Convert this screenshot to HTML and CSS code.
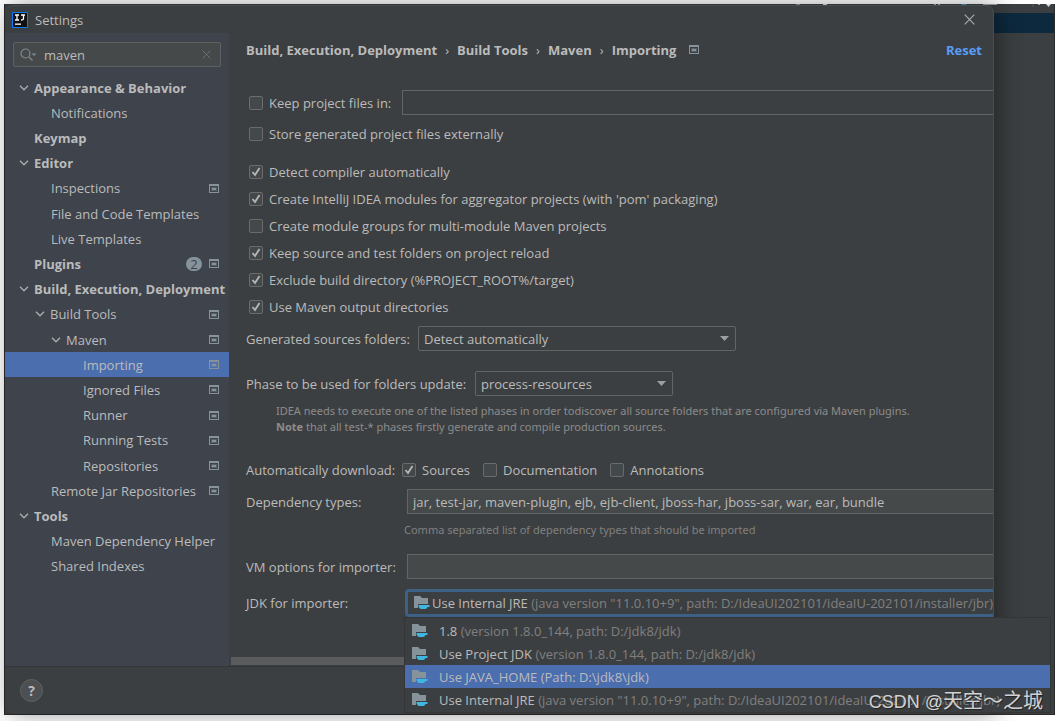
FILE: index.html
```html
<!DOCTYPE html>
<html lang="en">
<head>
<meta charset="utf-8">
<title>Settings</title>
<link rel="stylesheet" href="styles.css">
</head>
<body>
<svg class="sprites" aria-hidden="true">
  <symbol id="scope" viewBox="0 0 10 9"><path fill-rule="evenodd" d="M0 0h10v9H0zM1 2v6h8V2z"/><path d="M2 3h6v4H2zM3 4v2h4V4z" opacity=".35"/><path d="M3 4h4v2H3z"/></symbol>
  <symbol id="chevron" viewBox="0 0 10 6"><path d="M1 .8l4 4 4-4" fill="none" stroke="currentColor" stroke-width="1.3"/></symbol>
  <symbol id="jdk" viewBox="0 0 16 14"><path d="M0 0h6l2 2h6v6H4v4H0z" fill="#87939a"/><path d="M4.500 9h11v2h-2c-.6 1.300-1.300 1.800-2 2H7C5.500 12.500 4.500 11 4.500 9z" fill="#40b6e0"/></symbol>
</svg>
<div class="desktop">
  <div class="ide" aria-hidden="true">
    <div class="ide-toolbar"><svg width="244" height="3" viewBox="0 0 244 3"><circle cx="4" cy="0" r="2" fill="#999"/><circle cx="31" cy="0" r="2.200" fill="#ddd"/><path d="M140 0h2v1h-2zM144 0h2v1h-2z" fill="#aaa"/><circle cx="170" cy="-1" r="3" fill="#3592c4"/><path d="M189 0h14v1h-14z" fill="#9aa7b0"/><path d="M239 0v4M251 0h2" stroke="#555"/></svg><svg width="16" height="4" viewBox="0 0 16 4"><path d="M8 0h5l-2.500 3z" fill="#ddd"/><path d="M0 0h2v1H0z" fill="#aaa"/></svg></div>
    <div class="ide-tabs"></div>
  </div>
  <main class="dialog">
    <header class="titlebar">
      <svg width="16" height="16" viewBox="0 0 16 16"><path d="M.5.5h15v15H.5z" fill="#111" stroke="#087cfa"/><path d="M3 3h4M5 3v5M3 8h4M9 3h4M11.500 3v3.500q0 1.500-2.500 1.500" fill="none" stroke="#fff" stroke-width="1.300"/><path d="M3 11.500h6v1.300H3z" fill="#fff"/></svg>
      <h1>Settings</h1>
      <button class="close" aria-label="Close"><svg width="11" height="11" viewBox="0 0 11 11"><path d="M.7.7l9.600 9.600M10.300.7L.7 10.300" stroke="#a8aaab" stroke-width="1.200"/></svg></button>
    </header>
    <aside class="sidebar">
      <div class="search">
        <svg width="17" height="14" viewBox="0 0 17 14"><circle cx="5.500" cy="5.500" r="4.500" fill="none" stroke="#7f8b91" stroke-width="1.200"/><path d="M9 9l3.500 3.500" stroke="#7f8b91" stroke-width="1.300"/><path d="M11.500 5.500h5L14 8z" fill="#7f8b91"/></svg>
        <input type="text" value="maven" aria-label="Search settings">
        <button aria-label="Clear"><svg width="9" height="9" viewBox="0 0 9 9"><path d="M.7.7l7.600 7.600M8.300.7L.7 8.300" stroke="#6d7375"/></svg></button>
      </div>
      <ul class="tree">
        <li class="top"><svg class="chev"><use href="#chevron"/></svg><span>Appearance &amp; Behavior</span></li>
        <li class="l2"><span>Notifications</span></li>
        <li class="top leaf"><span>Keymap</span></li>
        <li class="top"><svg class="chev"><use href="#chevron"/></svg><span>Editor</span></li>
        <li class="l2"><span>Inspections</span><svg class="scope"><use href="#scope"/></svg></li>
        <li class="l2"><span>File and Code Templates</span></li>
        <li class="l2"><span>Live Templates</span></li>
        <li class="top leaf"><span>Plugins</span><b class="badge">2</b><svg class="scope"><use href="#scope"/></svg></li>
        <li class="top"><svg class="chev"><use href="#chevron"/></svg><span>Build, Execution, Deployment</span></li>
        <li class="l1"><svg class="chev"><use href="#chevron"/></svg><span>Build Tools</span><svg class="scope"><use href="#scope"/></svg></li>
        <li class="l2"><svg class="chev"><use href="#chevron"/></svg><span>Maven</span><svg class="scope"><use href="#scope"/></svg></li>
        <li class="l4 selected"><span>Importing</span><svg class="scope"><use href="#scope"/></svg></li>
        <li class="l4"><span>Ignored Files</span><svg class="scope"><use href="#scope"/></svg></li>
        <li class="l4"><span>Runner</span><svg class="scope"><use href="#scope"/></svg></li>
        <li class="l4"><span>Running Tests</span><svg class="scope"><use href="#scope"/></svg></li>
        <li class="l4"><span>Repositories</span><svg class="scope"><use href="#scope"/></svg></li>
        <li class="l2"><span>Remote Jar Repositories</span><svg class="scope"><use href="#scope"/></svg></li>
        <li class="top"><svg class="chev"><use href="#chevron"/></svg><span>Tools</span></li>
        <li class="l2"><span>Maven Dependency Helper</span></li>
        <li class="l2"><span>Shared Indexes</span></li>
      </ul>
    </aside>
    <section class="content">
      <nav class="crumbs">
        <span>Build, Execution, Deployment</span><i>›</i><span>Build Tools</span><i>›</i><span>Maven</span><i>›</i><span>Importing</span>
        <svg class="scope"><use href="#scope"/></svg>
        <a href="#reset">Reset</a>
      </nav>
      <form>
        <div class="row keep">
          <label class="check"><input type="checkbox">Keep project files in:</label>
          <input class="field plain" type="text" aria-label="Project files directory">
        </div>
        <div class="row store"><label class="check"><input type="checkbox">Store generated project files externally</label></div>
        <div class="options">
          <label class="check"><input type="checkbox" checked>Detect compiler automatically</label>
          <label class="check"><input type="checkbox" checked>Create IntelliJ IDEA modules for aggregator projects (with 'pom' packaging)</label>
          <label class="check"><input type="checkbox">Create module groups for multi-module Maven projects</label>
          <label class="check"><input type="checkbox" checked>Keep source and test folders on project reload</label>
          <label class="check"><input type="checkbox" checked>Exclude build directory (%PROJECT_ROOT%/target)</label>
          <label class="check"><input type="checkbox" checked>Use Maven output directories</label>
        </div>
        <div class="row sources">
          <label for="gen">Generated sources folders:</label>
          <select id="gen"><option>Detect automatically</option></select>
        </div>
        <div class="row phase">
          <label for="phase">Phase to be used for folders update:</label>
          <select id="phase"><option>process-resources</option></select>
        </div>
        <p class="note">IDEA needs to execute one of the listed phases in order todiscover all source folders that are configured via Maven plugins.<br><b>Note</b> that all test-* phases firstly generate and compile production sources.</p>
        <div class="row download">
          <span class="name">Automatically download:</span>
          <label class="check"><input type="checkbox" checked>Sources</label>
          <label class="check"><input type="checkbox">Documentation</label>
          <label class="check"><input type="checkbox">Annotations</label>
        </div>
        <div class="row dep">
          <label class="name" for="dep">Dependency types:</label>
          <input class="field" id="dep" type="text" value="jar, test-jar, maven-plugin, ejb, ejb-client, jboss-har, jboss-sar, war, ear, bundle">
        </div>
        <p class="hint">Comma separated list of dependency types that should be imported</p>
        <div class="row vm">
          <label class="name" for="vm">VM options for importer:</label>
          <input class="field" id="vm" type="text">
        </div>
        <div class="row jdk">
          <label class="name" for="jdk-button">JDK for importer:</label>
          <div class="combo">
            <button type="button" id="jdk-button" aria-haspopup="listbox" aria-expanded="true"><svg class="jdk-icon"><use href="#jdk"/></svg><span>Use Internal JRE <small>(java version "11.0.10+9", path: D:/IdeaUI202101/ideaIU-202101/installer/jbr)</small></span></button>
            <ul class="popup" role="listbox" aria-label="JDK for importer">
              <li role="option"><svg class="jdk-icon"><use href="#jdk"/></svg><span>1.8 <small>(version 1.8.0_144, path: D:/jdk8/jdk)</small></span></li>
              <li role="option"><svg class="jdk-icon"><use href="#jdk"/></svg><span>Use Project JDK <small>(version 1.8.0_144, path: D:/jdk8/jdk)</small></span></li>
              <li role="option" aria-selected="true" class="selected"><svg class="jdk-icon"><use href="#jdk"/></svg><span>Use JAVA_HOME <small>(Path: D:\jdk8\jdk)</small></span></li>
              <li role="option"><svg class="jdk-icon"><use href="#jdk"/></svg><span>Use Internal JRE <small>(java version "11.0.10+9", path: D:/IdeaUI202101/ideaIU-202101/installer/jbr)</small></span></li>
            </ul>
          </div>
        </div>
      </form>
      <div class="scrollbar"></div>
    </section>
    <footer class="footer"><button class="help" aria-label="Help">?</button></footer>
  </main>
  <div class="watermark"><span>CSDN @</span>天空～之城</div>
</div>
</body>
</html>
```

FILE: styles.css
```css
* { box-sizing: border-box; }
body {
  margin: 0;
  padding: 4px 4px 6px;
  min-height: 100vh;
  display: flex;
  background: #fff;
  color: #bbb;
  font: 13px/18px "Open Sans", "Noto Sans CJK SC", sans-serif;
}
button, input, select { font: inherit; color: inherit; margin: 0; }
button { border: 0; padding: 0; background: none; }
ul, p, h1 { margin: 0; padding: 0; list-style: none; font-size: inherit; font-weight: 400; }
svg { flex: none; display: block; }
.sprites { position: absolute; width: 0; height: 0; }

.desktop {
  position: relative;
  flex: 1;
  display: flex;
  background: #3c3f41;
  border: 1px solid #2b2b2b;
  border-top: 0;
}
.ide { position: absolute; inset: 0; }
.ide-toolbar { height: 9px; display: flex; justify-content: flex-end; gap: 0; }
.ide-tabs { height: 20px; background: #0d293e; }

.dialog {
  position: relative;
  flex: 1;
  margin: 1px 60px 0 0;
  display: grid;
  grid-template: 28px 1fr 48px / 224px 1fr;
  background: #3c3f41;
  border-right: 1px solid #4a4d4f;
  border-radius: 8px;
  box-shadow: 4px 0 24px rgba(0, 0, 0, .4);
}
.titlebar { grid-column: 1 / 3; display: flex; align-items: center; gap: 7px; padding: 0 18px 0 7px; border-top: 1px solid #4a4d4f; border-radius: 8px 8px 0 0; }
.close { margin-left: auto; }

.sidebar { min-width: 0; background: #3e434c; }
.search {
  height: 25px;
  margin: 9px 8px 0;
  padding: 0 9px 0 6px;
  display: flex;
  align-items: center;
  gap: 7px;
  background: #45494a;
  border: 1px solid #5e6162;
  border-radius: 2px;
}
.search input { flex: 1; min-width: 0; padding: 0; border: 0; outline: 0; background: none; }
.tree { min-height: 504px; margin-top: 8px; display: grid; grid-template-columns: 100%; grid-auto-rows: 1fr; }
.tree li { min-width: 0; display: flex; align-items: center; padding: 0 10px 0 14px; gap: 5px; white-space: nowrap; }
.tree span { margin-right: auto; }
.tree .top span { font-weight: 700; }
.tree .leaf { padding-left: 29px; }
.tree .l1 { padding-left: 30px; }
.tree .l2 { padding-left: 46px; }
.tree .l4 { padding-left: 78px; }
.tree .selected { background: #4b6eaf; }
.chev { width: 10px; height: 6px; color: #adadad; }
.scope { width: 10px; height: 9px; fill: #87939a; }
.badge { width: 16px; height: 14px; margin-right: 2px; border-radius: 7px; background: #87939a; color: #3e434c; font-weight: 400; line-height: 14px; text-align: center; }

.content { min-width: 0; display: flex; flex-direction: column; padding-left: 17px; }
.crumbs { height: 33px; display: flex; align-items: center; padding-right: 11px; font-weight: 700; white-space: nowrap; }
.crumbs i { width: 20px; text-align: center; font-style: normal; font-weight: 400; }
.crumbs .scope { margin-left: 13px; }
.crumbs a { margin-left: auto; color: #589df6; text-decoration: none; }

form { padding-top: 24px; }
.row { display: flex; align-items: center; white-space: nowrap; }
.check { display: flex; align-items: center; gap: 6px; padding-left: 3px; white-space: nowrap; }
.check input {
  appearance: none;
  flex: none;
  width: 14px;
  height: 14px;
  border: 1px solid #6b6b6b;
  border-radius: 2px;
  background: #43494a;
}
.check input:checked {
  background: #43494a url("data:image/svg+xml,%3Csvg xmlns='http://www.w3.org/2000/svg' viewBox='0 0 12 12'%3E%3Cpath d='M2.500 6l2.500 3L9.500 2' fill='none' stroke='%23b5b5b5' stroke-width='1.900'/%3E%3C/svg%3E");
}
.field {
  flex: 1;
  min-width: 0;
  height: 25px;
  padding: 0 5px;
  border: 1px solid #646464;
  border-right: 0;
  background: #45494a;
  outline: 0;
}
.field.plain { background: none; }
.keep .check { width: 156px; }
.store { height: 24px; margin-top: 7px; }
.options { margin-top: 12px; display: grid; grid-auto-rows: 27px; }
select {
  appearance: none;
  height: 25px;
  padding: 0 5px;
  border: 1px solid #646464;
  border-radius: 2px;
  background: #3c3f41 url("data:image/svg+xml,%3Csvg xmlns='http://www.w3.org/2000/svg' width='9' height='5'%3E%3Cpath d='M0 0h9L4.500 5z' fill='%239da0a1'/%3E%3C/svg%3E") no-repeat right 6px center;
}
.sources { margin-top: 6px; }
.sources label { width: 172px; }
.sources select { width: 318px; }
.phase { margin-top: 20px; }
.phase label { width: 229px; }
.phase select { width: 198px; }
.note { margin: 7px 0 0 30px; font-size: 11px; line-height: 16px; color: #8c8c8c; white-space: nowrap; }
.note b { font-weight: 700; }
.note, .hint { font-family: "Noto Sans", sans-serif; }
.download { height: 24px; margin-top: 23px; gap: 10px; }
.download .name { width: 143px; }
.name { width: 161px; }
.dep { margin-top: 7px; }
.hint { margin: 8px 0 0 158px; font-size: 11px; line-height: 16px; color: #808080; }
.vm { margin-top: 16px; }
.jdk { margin-top: 10px; }
.jdk .name { width: 159px; }
.combo { position: relative; flex: 1; min-width: 0; }
.combo button {
  width: 100%;
  height: 28px;
  padding: 0 6px;
  display: flex;
  align-items: center;
  gap: 2px;
  white-space: nowrap;
  border: 3px solid #3d6185;
  border-right: 0;
  border-radius: 4px 0 0 4px;
}
.combo small { font-size: inherit; color: #808080; }
.jdk-icon { width: 16px; height: 14px; }
.popup {
  position: absolute;
  z-index: 1;
  top: 100%;
  left: -1px;
  right: -58px;
  padding: 1px 0;
  background: #3c3f41;
  border: 1px solid #333536;
}
.popup li { height: 23px; display: flex; align-items: center; gap: 11px; padding-left: 7px; white-space: nowrap; }
.popup .selected { background: #4b6eaf; }
.popup .selected small { color: inherit; }
.scrollbar { height: 8px; margin: auto 0 1px -15px; background: #595b5d; }
.footer { grid-column: 1 / 3; display: flex; align-items: center; padding-left: 15px; border-top: 1px solid #333536; }
.help { width: 23px; height: 23px; border: 1px solid #5e6162; border-radius: 50%; background: #4c5052; font-size: 14px; font-weight: 700; line-height: 20px; }

.watermark {
  position: absolute;
  z-index: 2;
  right: 11px;
  bottom: 0;
  font: 20px/24px "Noto Sans CJK SC", sans-serif;
  color: #d2d2d2;
  text-shadow: 1px 1px 1px #222;
}
.watermark span { font: 18px/24px "Liberation Sans", sans-serif; }
```
